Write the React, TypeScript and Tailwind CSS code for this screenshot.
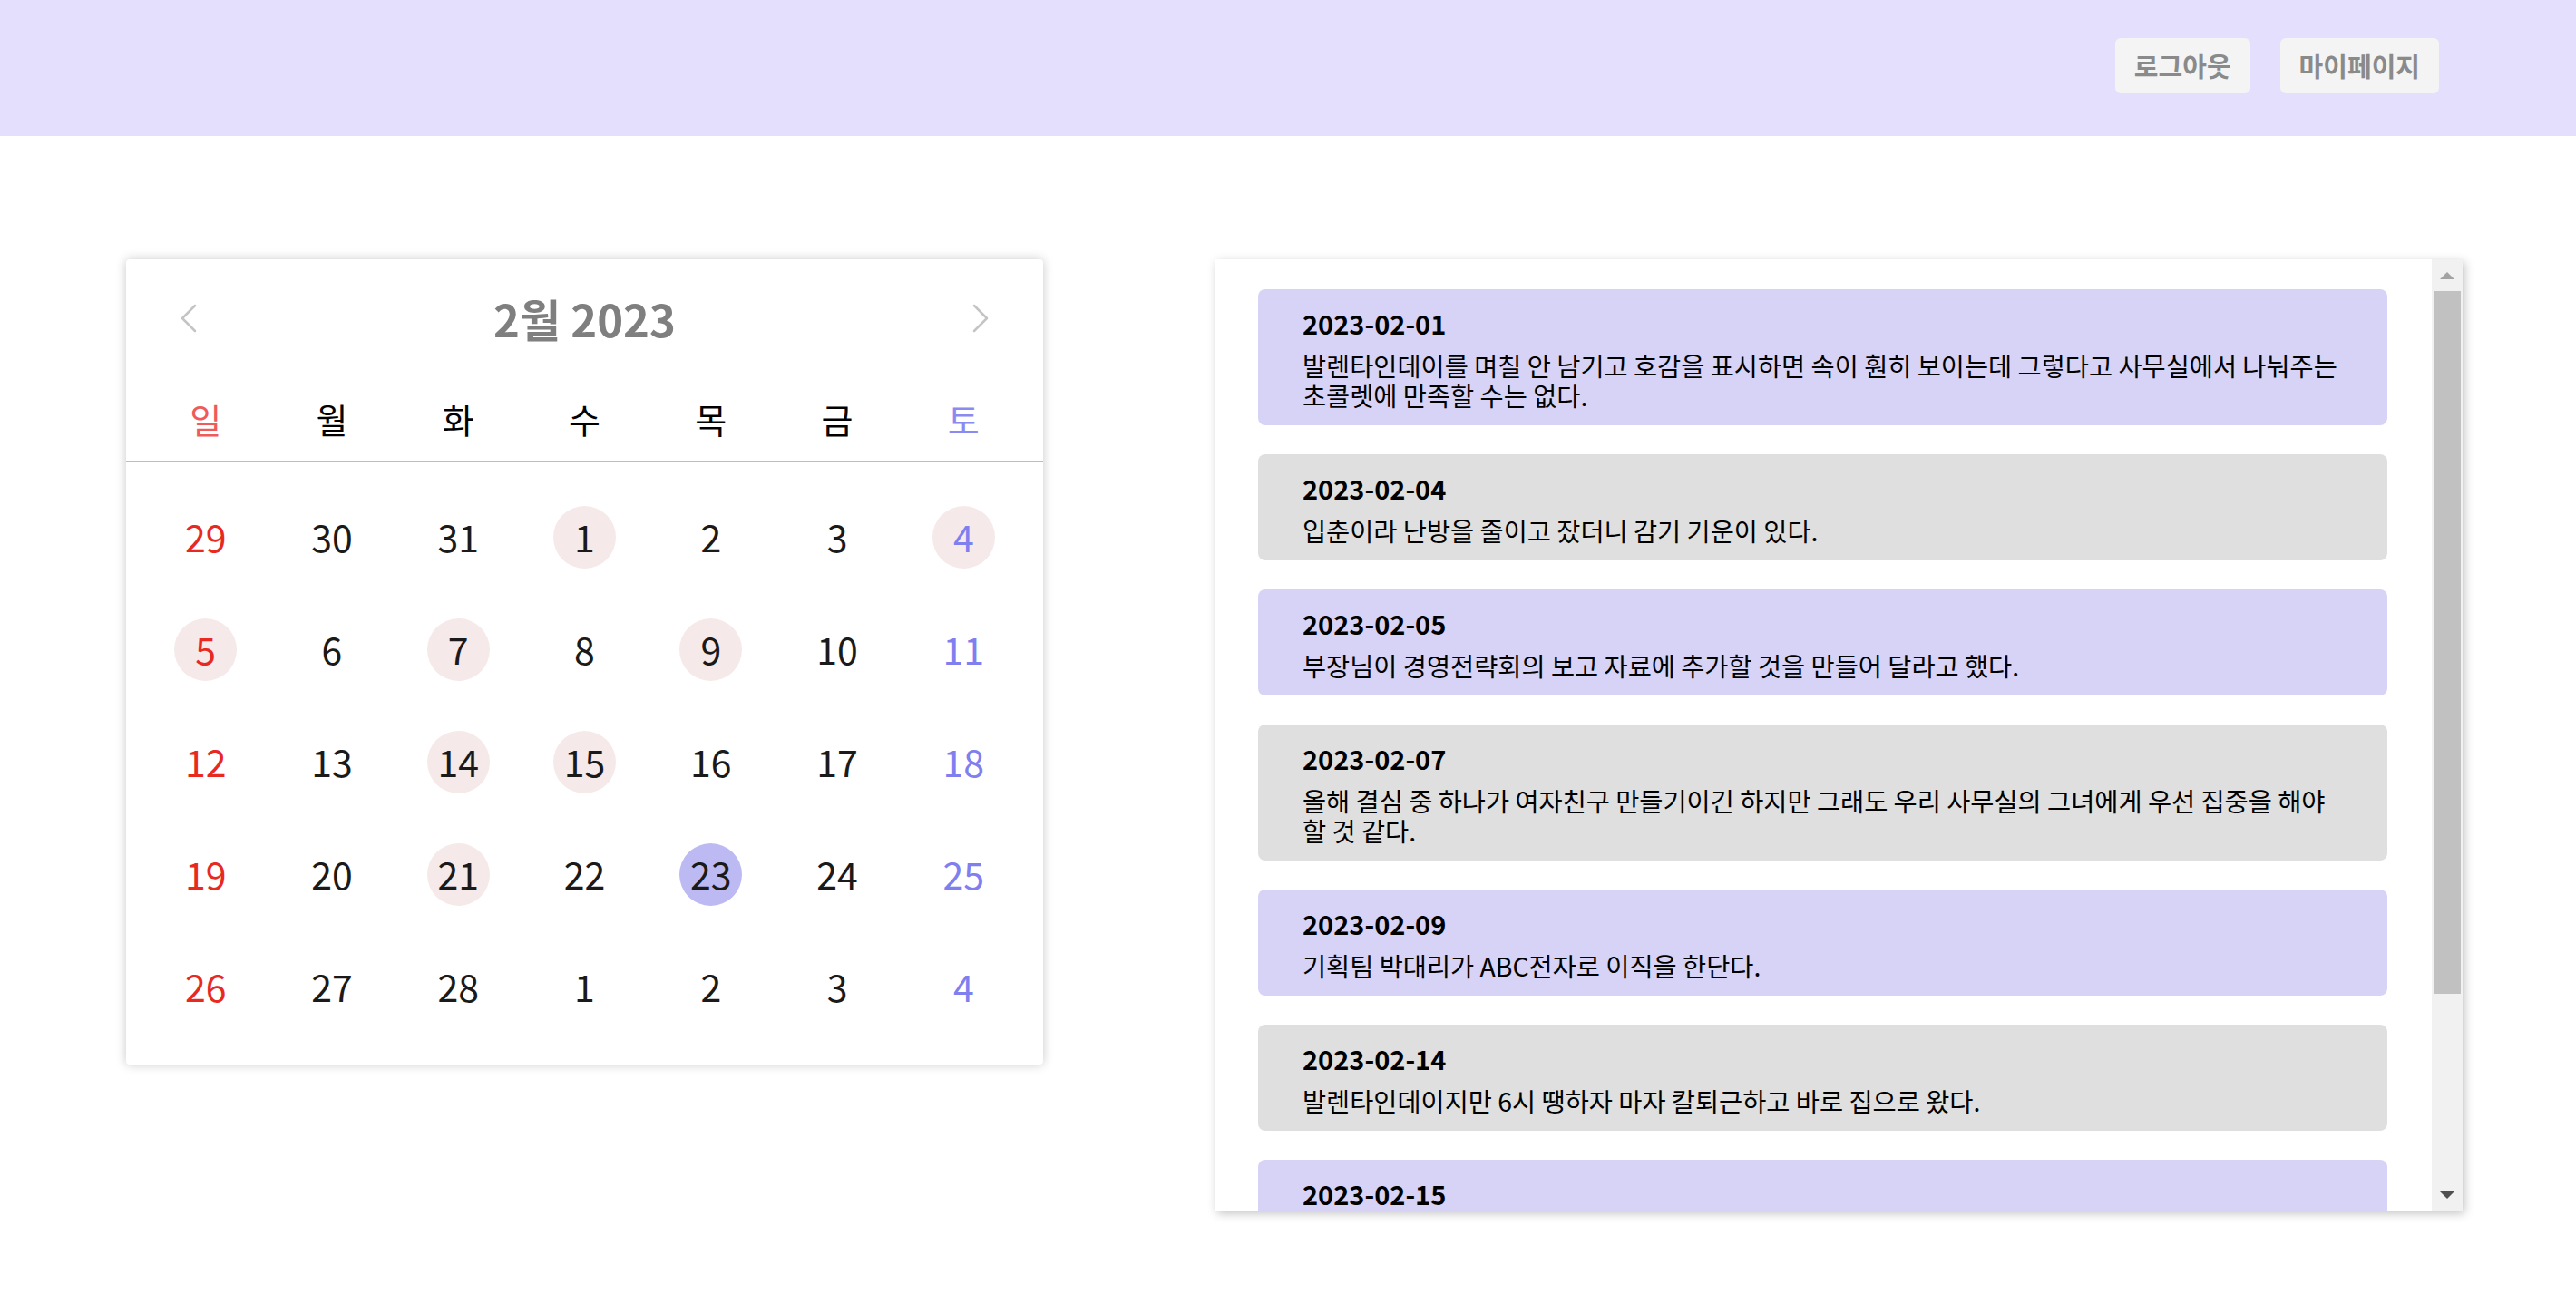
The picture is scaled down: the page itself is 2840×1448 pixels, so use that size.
import React from "react";
import { ChevronLeft, ChevronRight } from "lucide-react";

type Diary = { date: string; text: string };

const diaries: Diary[] = [
  {
    date: "2023-02-01",
    text: "발렌타인데이를 며칠 안 남기고 호감을 표시하면 속이 훤히 보이는데 그렇다고 사무실에서 나눠주는 초콜렛에 만족할 수는 없다.",
  },
  { date: "2023-02-04", text: "입춘이라 난방을 줄이고 잤더니 감기 기운이 있다." },
  { date: "2023-02-05", text: "부장님이 경영전략회의 보고 자료에 추가할 것을 만들어 달라고 했다." },
  {
    date: "2023-02-07",
    text: "올해 결심 중 하나가 여자친구 만들기이긴 하지만 그래도 우리 사무실의 그녀에게 우선 집중을 해야 할 것 같다.",
  },
  { date: "2023-02-09", text: "기획팀 박대리가 ABC전자로 이직을 한단다." },
  { date: "2023-02-14", text: "발렌타인데이지만 6시 땡하자 마자 칼퇴근하고 바로 집으로 왔다." },
  { date: "2023-02-15", text: "사무실의 그녀가 초콜렛을 건네주었다. 의미가 있는 걸까?" },
  { date: "2023-02-21", text: "오늘은 야근. 내일은 꼭 일찍 들어가야겠다." },
];

const weeks = [
  [29, 30, 31, 1, 2, 3, 4],
  [5, 6, 7, 8, 9, 10, 11],
  [12, 13, 14, 15, 16, 17, 18],
  [19, 20, 21, 22, 23, 24, 25],
  [26, 27, 28, 1, 2, 3, 4],
];

const weekdays = ["일", "월", "화", "수", "목", "금", "토"];
const marked = [1, 4, 5, 7, 9, 14, 15, 21];
const today = 23;

const font = "font-['Noto_Sans_CJK_KR','Noto_Sans',sans-serif]";

const Header = () => (
  <header className="flex h-[150px] items-start justify-end gap-[33px] bg-[#e3dffc] pr-[151px] pt-[42px]">
    <button className="h-[61px] rounded-[6px] bg-[#f4f4f4] px-[21px] text-[29px] font-bold text-[#8a8a8a]">
      로그아웃
    </button>
    <button className="h-[61px] rounded-[6px] bg-[#f4f4f4] px-[21px] text-[29px] font-bold text-[#8a8a8a]">
      마이페이지
    </button>
  </header>
);

const Calendar = () => (
  <div className="h-[888px] w-[1011px] shrink-0 rounded-[4px] bg-white shadow-[0_0_12px_rgba(0,0,0,0.22)]">
    <div className="mt-[35px] flex h-[60px] items-center justify-between px-[41px]">
      <ChevronLeft size={56} strokeWidth={1.1} color="#c4c4c4" />
      <span className="text-[49px] font-bold text-[#7f7f7f]">2월 2023</span>
      <ChevronRight size={56} strokeWidth={1.1} color="#c4c4c4" />
    </div>
    <div className="mt-[52px] grid h-[50px] grid-cols-7 items-center px-[18px] text-[38px]">
      {weekdays.map((w, i) => (
        <span
          key={w}
          className={
            "text-center " +
            (i === 0 ? "text-[#ef5b5b]" : i === 6 ? "text-[#8a8af0]" : "text-black")
          }
        >
          {w}
        </span>
      ))}
    </div>
    <div className="mt-[25px] border-t-2 border-[#bdbdbd] px-[18px] pt-[20px]">
      {weeks.map((week, wi) => (
        <div key={wi} className="grid h-[124px] grid-cols-7 items-center">
          {week.map((d, i) => {
            const inMonth = !((wi === 0 && i < 3) || (wi === 4 && i >= 3));
            const isToday = inMonth && d === today;
            const isMarked = inMonth && marked.includes(d);
            return (
              <div key={i} className="flex justify-center">
                <span
                  className={
                    "flex h-[69px] w-[69px] items-center justify-center rounded-full text-[41px] font-normal " +
                    (isToday ? "bg-[#bdbaf3] " : isMarked ? "bg-[#f5e9ea] " : "") +
                    (i === 0 ? "text-[#e8291f]" : i === 6 ? "text-[#7f7ff0]" : "text-[#1a1a1a]")
                  }
                >
                  {d}
                </span>
              </div>
            );
          })}
        </div>
      ))}
    </div>
  </div>
);

const Scrollbar = () => (
  <div className="flex w-[34px] shrink-0 flex-col items-center bg-[#f1f1f1]">
    <div className="flex h-[35px] w-full items-center justify-center">
      <div className="h-0 w-0 border-x-[8px] border-b-[8px] border-x-transparent border-b-[#a3a3a3]" />
    </div>
    <div className="h-[775px] w-[30px] bg-[#c1c1c1]" />
    <div className="flex-1" />
    <div className="flex h-[35px] w-full items-center justify-center">
      <div className="h-0 w-0 border-x-[8px] border-t-[8px] border-x-transparent border-t-[#505050]" />
    </div>
  </div>
);

const DiaryList = () => (
  <div className="flex h-[1049px] w-[1375px] shrink-0 bg-white shadow-[2px_3px_10px_rgba(0,0,0,0.25)]">
    <div className="flex flex-1 flex-col gap-[32px] overflow-hidden pl-[47px] pr-[49px] pt-[33px]">
      {diaries.map((d, i) => (
        <div
          key={d.date}
          className={
            "shrink-0 rounded-[8px] px-[49px] pb-[17px] pt-[17px] " +
            (i % 2 === 0 ? "bg-[#d6d3f6]" : "bg-[#dfdfdf]")
          }
        >
          <div className="text-[29px] font-bold leading-[40px] text-black">{d.date}</div>
          <p className="mt-[10px] text-[28.4px] leading-[33px] text-black">{d.text}</p>
        </div>
      ))}
    </div>
    <Scrollbar />
  </div>
);

export default function App() {
  return (
    <div className={"min-h-[1448px] bg-white " + font}>
      <Header />
      <main className="flex gap-[190px] pl-[139px] pt-[136px]">
        <Calendar />
        <DiaryList />
      </main>
    </div>
  );
}
